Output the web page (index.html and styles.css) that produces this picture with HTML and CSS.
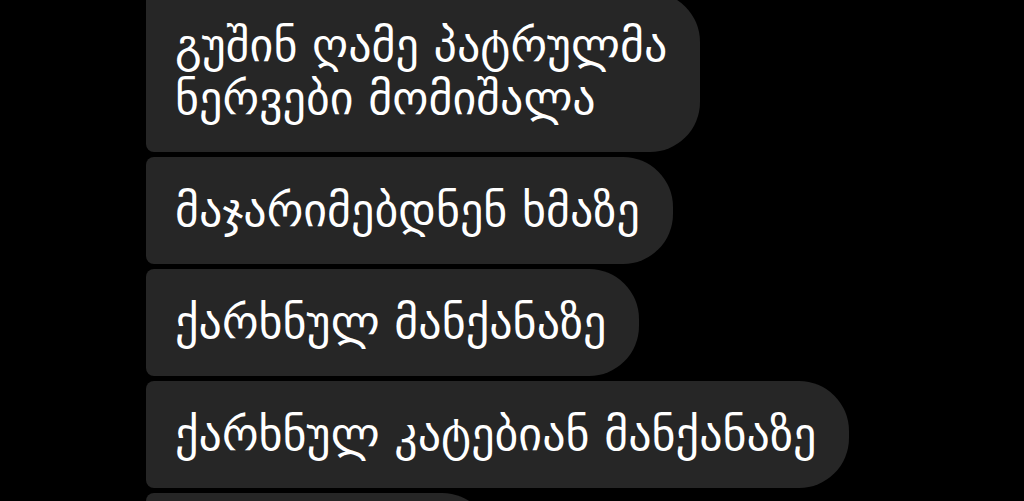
FILE: index.html
```html
<!DOCTYPE html>
<html lang="ka">
<head>
    <meta charset="UTF-8">
    <meta name="viewport" content="width=device-width, initial-scale=1.0">
    <title>ჩატი</title>
    <link rel="stylesheet" href="styles.css">
</head>
<body>
    <div class="thread">
        <div class="bubble">გუშინ ღამე პატრულმა<br>ნერვები მომიშალა</div>
        <div class="bubble">მაჯარიმებდნენ ხმაზე</div>
        <div class="bubble">ქარხნულ მანქანაზე</div>
        <div class="bubble">ქარხნულ კატებიან მანქანაზე</div>
        <div class="bubble">თან რა დრო</div>
    </div>
</body>
</html>
```

FILE: styles.css
```css
html, body {
    margin: 0;
    height: 501px;
    overflow: hidden;
    background-color: #000000;
}
.thread {
    display: flex;
    flex-direction: column;
    align-items: flex-start;
    gap: 5px;
    padding-left: 146px;
    margin-top: -8px;
}
.bubble {
    background-color: #262626;
    color: #ffffff;
    font-family: "DejaVu Sans", "Noto Sans", sans-serif;
    font-size: 46px;
    line-height: 53px;
    padding: 27px 33px 27px 29px;
    border-radius: 8px 50px 50px 8px;
    white-space: nowrap;
}
```
